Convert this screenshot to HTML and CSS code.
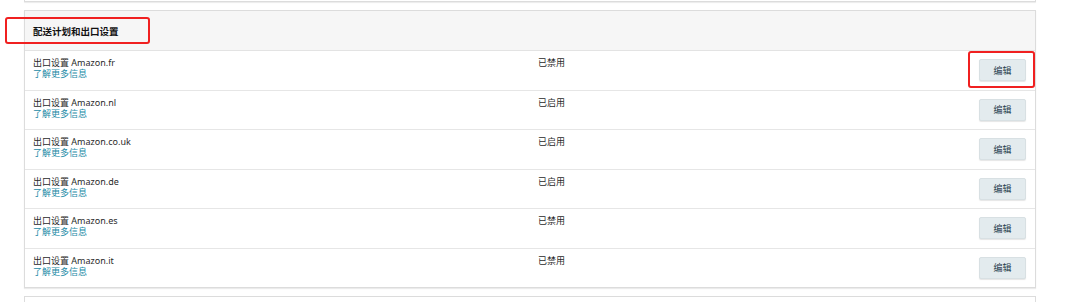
FILE: index.html
```html
<!DOCTYPE html>
<html lang="zh-CN">
<head>
    <meta charset="UTF-8">
    <title>配送计划和出口设置</title>
    <link rel="stylesheet" href="styles.css">
</head>
<body>
    <div class="page">
        <div class="card card-top"></div>

        <div class="card settings">
            <div class="card-header">
                <h2>配送计划和出口设置</h2>
                <span class="mark mark-header"></span>
            </div>

            <div class="row">
                <div class="info">
                    <div>出口设置 Amazon.fr</div>
                    <a href="#">了解更多信息</a>
                </div>
                <div class="status">已禁用</div>
                <div class="action">
                    <button>编辑</button>
                    <span class="mark mark-button"></span>
                </div>
            </div>

            <div class="row">
                <div class="info">
                    <div>出口设置 Amazon.nl</div>
                    <a href="#">了解更多信息</a>
                </div>
                <div class="status">已启用</div>
                <div class="action"><button>编辑</button></div>
            </div>

            <div class="row">
                <div class="info">
                    <div>出口设置 Amazon.co.uk</div>
                    <a href="#">了解更多信息</a>
                </div>
                <div class="status">已启用</div>
                <div class="action"><button>编辑</button></div>
            </div>

            <div class="row">
                <div class="info">
                    <div>出口设置 Amazon.de</div>
                    <a href="#">了解更多信息</a>
                </div>
                <div class="status">已启用</div>
                <div class="action"><button>编辑</button></div>
            </div>

            <div class="row">
                <div class="info">
                    <div>出口设置 Amazon.es</div>
                    <a href="#">了解更多信息</a>
                </div>
                <div class="status">已禁用</div>
                <div class="action"><button>编辑</button></div>
            </div>

            <div class="row">
                <div class="info">
                    <div>出口设置 Amazon.it</div>
                    <a href="#">了解更多信息</a>
                </div>
                <div class="status">已禁用</div>
                <div class="action"><button>编辑</button></div>
            </div>
        </div>

        <div class="card card-bottom"></div>
    </div>
</body>
</html>
```

FILE: styles.css
```css
body {
    margin: 0;
    background: #fff;
    font-family: "Noto Sans", "Noto Sans CJK SC", sans-serif;
    color: #2a2a2a;
    font-size: 9px;
}
.page {
    padding: 0 44px 0 24px;
}
.card {
    background: #fff;
    border: 1px solid #dcdcdc;
    box-shadow: 0 1px 1px rgba(0,0,0,0.08);
}
.card-top {
    height: 1px;
    border-top: none;
}
.settings {
    margin-top: 8px;
    position: relative;
}
.card-bottom {
    margin-top: 8px;
    height: 20px;
    border-bottom: none;
    box-shadow: none;
}
.card-header {
    height: 39px;
    background: #f6f6f6;
    border-bottom: 1px solid #e3e3e3;
    display: flex;
    align-items: center;
    padding: 0 8px;
    position: relative;
}
.card-header h2 {
    margin: 0;
    font-size: 9.5px;
    font-weight: bold;
    color: #111;
}
.row {
    height: 38.5px;
    border-bottom: 1px solid #e6e6e6;
    display: grid;
    grid-template-columns: 505px 1fr auto;
    padding: 0 9px 0 8px;
}
.row:last-child {
    border-bottom: none;
}
.info {
    padding-top: 6px;
    line-height: 11px;
}
.info a {
    color: #1a8aa6;
    text-decoration: none;
}
.status {
    padding-top: 6px;
    line-height: 11px;
}
.action {
    display: flex;
    align-items: center;
    position: relative;
}
button {
    width: 47px;
    height: 22px;
    background: #e3ebee;
    border: 1px solid #d8e0e3;
    border-radius: 2px;
    box-shadow: 0 1px 1px rgba(0,0,0,0.1);
    font-family: "Noto Sans CJK SC", sans-serif;
    font-size: 9px;
    color: #1f3a4a;
    padding: 0;
    cursor: pointer;
}
/* red annotation frames */
.mark {
    position: absolute;
    border: 2px solid #f02020;
    border-radius: 3px;
}
.mark-header {
    left: -20px;
    top: 6px;
    width: 141px;
    height: 23px;
}
.mark-button {
    left: -11px;
    top: 0px;
    width: 63px;
    height: 33px;
}
```
